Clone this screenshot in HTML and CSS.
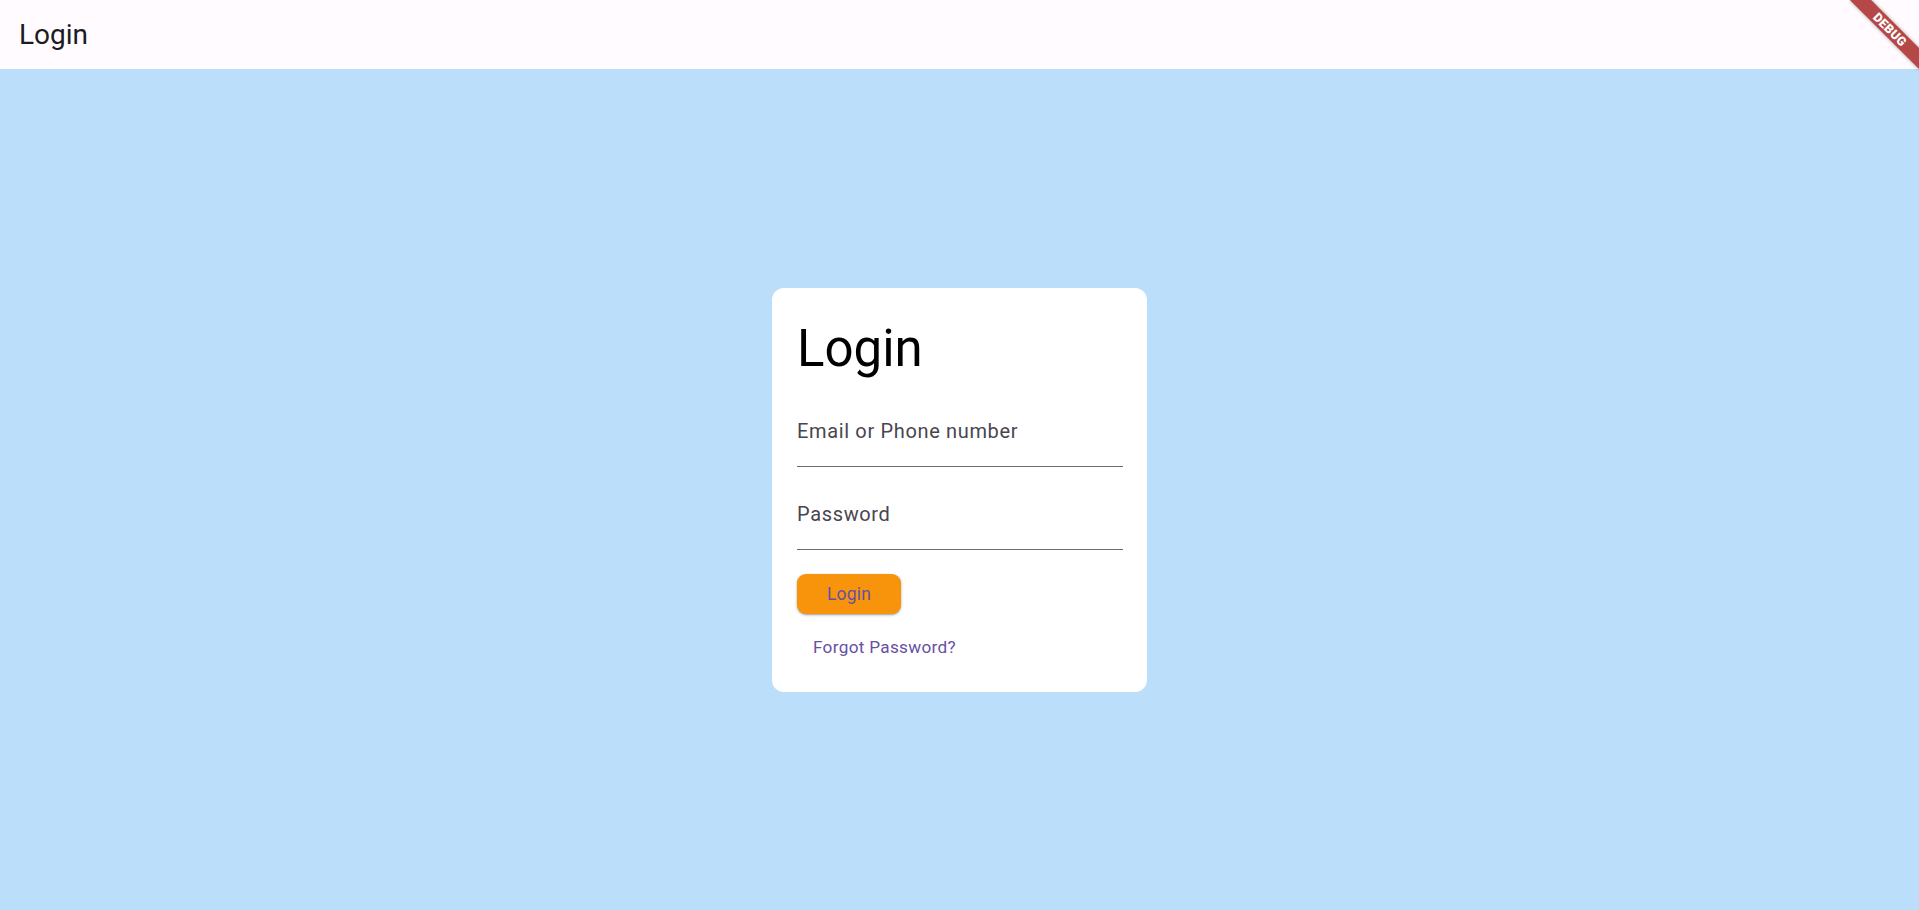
FILE: index.html
```html
<!DOCTYPE html>
<html lang="en">
<head>
<meta charset="utf-8">
<title>Login</title>
<link rel="stylesheet" href="styles.css">
</head>
<body>
<div class="app">
  <header class="appbar">
    <h1 class="appbar-title">Login</h1>
  </header>
  <main class="content">
    <form class="card">
      <h2 class="card-title">Login</h2>
      <label class="field">
        <span class="field-label">Email or Phone number</span>
      </label>
      <label class="field field-password">
        <span class="field-label">Password</span>
      </label>
      <button type="button" class="btn-login">Login</button>
      <a class="forgot" href="#">Forgot Password?</a>
    </form>
  </main>
  <div class="debug-banner">DEBUG</div>
</div>
</body>
</html>
```

FILE: styles.css
```css
* { box-sizing: border-box; }

html, body {
  margin: 0;
  padding: 0;
  height: 100%;
}

body {
  font-family: Roboto, "Noto Sans", "Liberation Sans", sans-serif;
  overflow: hidden;
}

.app {
  position: relative;
  height: 910px;
  display: flex;
  flex-direction: column;
  overflow: hidden;
}

.appbar {
  height: 69px;
  flex: 0 0 69px;
  background: #fffbfe;
  display: flex;
  align-items: center;
  padding-left: 19px;
}

.appbar-title {
  margin: 0;
  font-size: 28px;
  line-height: 32px;
  font-weight: 400;
  color: #1c1b1f;
}

.content {
  flex: 1;
  background: #bbdefb;
  display: flex;
  align-items: center;
  justify-content: center;
}

.card {
  width: 375px;
  background: #ffffff;
  border-radius: 12px;
  padding: 32px 24px 35px 25px;
  display: flex;
  flex-direction: column;
  align-items: flex-start;
}

.card-title {
  margin: 0;
  font-size: 51px;
  line-height: 57px;
  font-weight: 400;
  color: #000000;
}

.field {
  display: block;
  align-self: stretch;
  margin-top: 42px;
  padding-bottom: 23px;
  border-bottom: 1px solid #6f6c73;
}

.field-password {
  margin-top: 35px;
}

.field-label {
  display: block;
  font-size: 20px;
  line-height: 24px;
  letter-spacing: 0.65px;
  color: #49454f;
}

.btn-login {
  margin-top: 24px;
  width: 104px;
  height: 40px;
  border: none;
  border-radius: 9px;
  background: #f8940b;
  color: #6750a4;
  font-family: inherit;
  font-size: 17.5px;
  line-height: 20px;
  letter-spacing: 0.2px;
  box-shadow: 0 1px 3px rgba(0, 0, 0, 0.3), 0 1px 1px rgba(0, 0, 0, 0.12);
  padding: 0;
}

.forgot {
  margin-top: 23px;
  margin-left: 16px;
  font-size: 17.2px;
  line-height: 20px;
  letter-spacing: 0.3px;
  color: #6750a4;
  text-decoration: none;
}

.debug-banner {
  position: absolute;
  top: 22px;
  right: -20px;
  width: 98px;
  height: 15px;
  background: #b54747;
  color: #ffffff;
  font-family: Roboto, "Liberation Sans", sans-serif;
  font-weight: 900;
  font-size: 12.5px;
  line-height: 15px;
  text-align: center;
  letter-spacing: 0.3px;
  transform: rotate(45deg);
  box-shadow: 0 0 4px rgba(0, 0, 0, 0.35);
}
```
